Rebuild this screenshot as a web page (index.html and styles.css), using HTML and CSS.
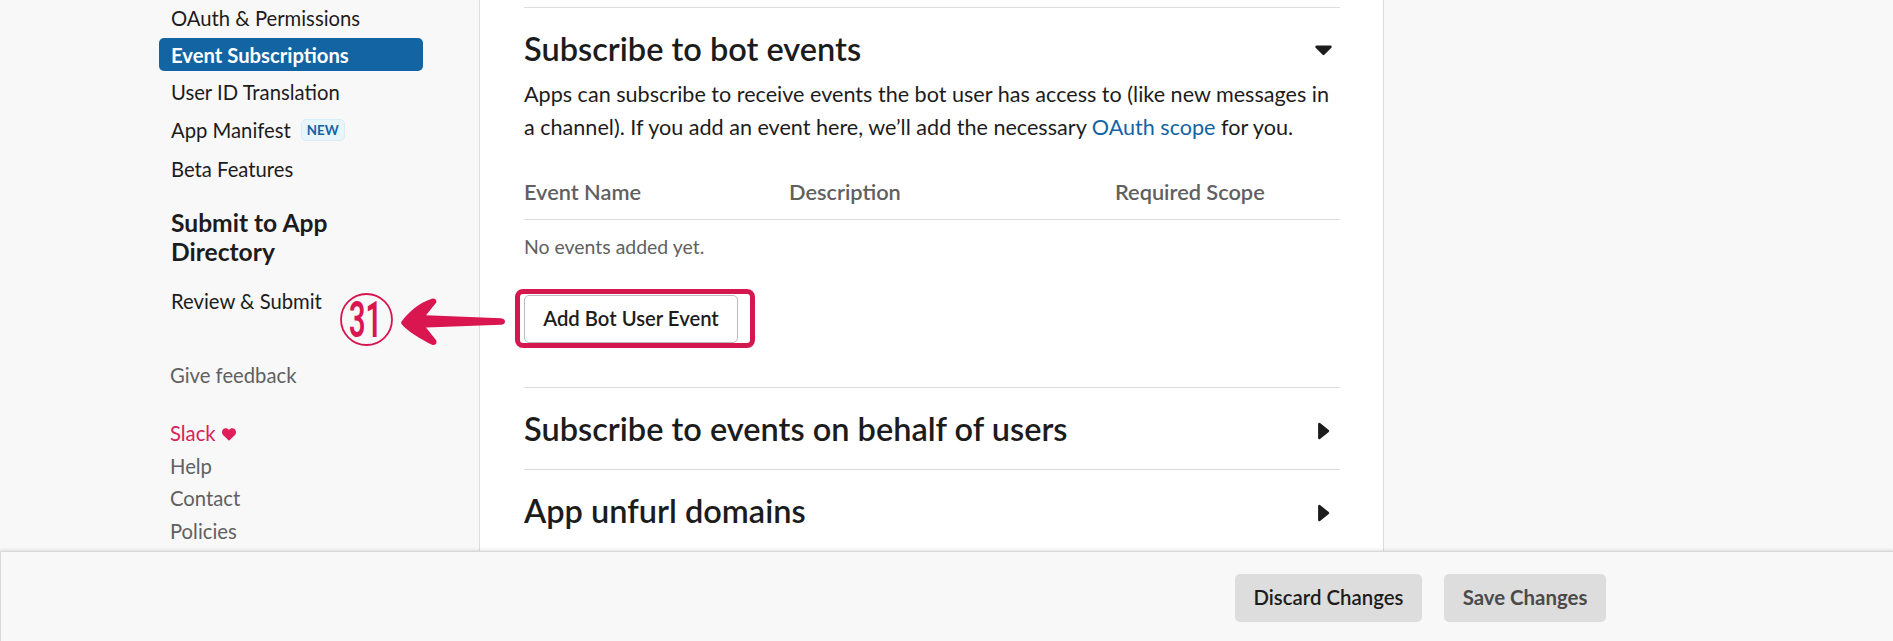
FILE: index.html
```html
<!DOCTYPE html>
<html lang="en">
<head>
<meta charset="utf-8">
<title>Event Subscriptions</title>
<link rel="stylesheet" href="styles.css">
</head>
<body>
<div class="page">
  <aside class="sidebar">
    <nav class="nav">
      <a class="nav-item">OAuth &amp; Permissions</a>
      <a class="nav-item active">Event Subscriptions</a>
      <a class="nav-item">User ID Translation</a>
      <a class="nav-item with-badge">App Manifest <span class="badge">NEW</span></a>
      <a class="nav-item">Beta Features</a>
    </nav>
    <h3 class="nav-title">Submit to App<br>Directory</h3>
    <a class="nav-item">Review &amp; Submit</a>
    <div class="links">
      <a class="feedback">Give feedback</a>
      <a class="slack">Slack <svg class="heart" viewBox="0 0 14 13"><path d="M7 12.8 1 6.9C-.4 5.400-.3 2.800 1.100 1.300 2.700-.3 5.500-.1 7 2 8.500-.1 11.300-.3 12.900 1.300 14.300 2.800 14.400 5.400 13 6.900Z"/></svg></a>
      <a>Help</a>
      <a>Contact</a>
      <a>Policies</a>
    </div>
  </aside>
  <main class="card">
    <section class="section bot">
      <header class="section-head"><h2>Subscribe to bot events</h2>
        <svg class="caret" viewBox="0 0 18 18"><path d="M1.500 5.800h14L8.500 13Z"/></svg></header>
      <p class="intro">Apps can subscribe to receive events the bot user has access to (like new messages in a channel). If you add an event here, we’ll add the necessary <a class="link">OAuth scope</a> for you.</p>
      <div class="table-head"><span>Event Name</span><span>Description</span><span>Required Scope</span></div>
      <p class="empty">No events added yet.</p>
      <div class="action">
        <button class="btn outline">Add Bot User Event</button>
        <div class="highlight"></div>
        <svg class="callout" viewBox="0 0 170 60">
          <circle cx="26.500" cy="29.500" r="25.500"/>
          <text x="9" y="46.800" textLength="33" lengthAdjust="spacingAndGlyphs">31</text>
          <path d="M61.500 31.500C68 23 78 13 92.500 8.500Q97 8.500 96.300 12.500L86 25.300 161 28.300Q165.200 29 165 31.700 164.800 34.300 161 34.800L86 37.500 96.300 50.500Q97.500 55 92.500 55C82 50 67 41 61.500 34Q60.700 32.700 61.500 31.500Z"/>
        </svg>
      </div>
    </section>
    <section class="section">
      <header class="section-head"><h2>Subscribe to events on behalf of users</h2>
        <svg class="caret" viewBox="0 0 18 18"><path d="M4.300 3v14L13 10Z"/></svg></header>
    </section>
    <section class="section">
      <header class="section-head"><h2>App unfurl domains</h2>
        <svg class="caret" viewBox="0 0 18 18"><path d="M4.300 3v14L13 10Z"/></svg></header>
    </section>
  </main>
</div>
<footer class="footer">
  <button class="btn gray">Discard Changes</button>
  <button class="btn gray save">Save Changes</button>
</footer>
</body>
</html>
```
FILE: styles.css
```css
* { box-sizing: border-box; }
body {
  margin: 0;
  height: 641px;
  overflow: hidden;
  display: flex;
  flex-direction: column;
  background: #f8f8f8;
  color: #1d1c1d;
  font-family: Lato, sans-serif;
  font-size: 20.25px;
}
h2, h3, p { margin: 0; }
.page { display: flex; height: 551px; flex: none; overflow: hidden; }

/* Sidebar */
.sidebar { width: 479px; flex: none; padding: 1px 56px 0 159px; }
.nav { display: flex; flex-direction: column; gap: 4px; }
.nav-item {
  display: flex;
  align-items: center;
  height: 33px;
  padding: 2px 0 0 12px;
  border-radius: 5px;
  line-height: 33px;
}
.active { background: #1264a3; color: #fff; font-weight: 700; font-size: 20.25px; }
.with-badge { height: 36px; gap: 10px; padding-top: 0; }
.badge {
  height: 22px;
  padding: 0 5px;
  border: 1px solid #d9ecf6;
  border-radius: 5px;
  background: #e8f5fa;
  color: #1264a3;
  font-size: 13.3px;
  font-weight: 700;
  line-height: 20px;
}
.nav-title { margin: 23px 0 18px; padding-left: 12px; font-size: 24.600px; line-height: 29px; font-weight: 700; }
.links { display: flex; flex-direction: column; padding: 42px 0 0 11px; color: #616061; line-height: 32.6px; }
.feedback { margin-bottom: 25.4px; }
.slack { display: flex; align-items: center; gap: 6px; color: #d72358; }
.heart { width: 14px; height: 13px; fill: #e01e5a; margin-top: 2px; }

/* Main card */
.card {
  width: 905px;
  flex: none;
  height: 551px;
  padding: 7px 43px 0 44px;
  border: solid #ddd;
  border-width: 0 1px;
  background: #fff;
}
.section { height: 82px; border-top: 1px solid #ddd; padding-top: 21px; }
.bot { height: 380px; }
.section-head { display: flex; justify-content: space-between; align-items: center; height: 39px; padding-right: 7px; }
h2 { font-size: 32.5px; line-height: 39px; font-weight: 600; }
.caret { width: 18px; height: 18px; overflow: visible; fill: #1d1c1d; stroke: #1d1c1d; stroke-width: 2.4; stroke-linejoin: round; margin-top: 2px; }
.intro { margin-top: 10px; font-size: 21.58px; line-height: 33px; }
.link { color: #1264a3; }
.table-head {
  display: grid;
  grid-template-columns: 265px 326px 1fr;
  margin-top: 35px;
  height: 41px;
  border-bottom: 1px solid #ddd;
  color: #616061;
  font-size: 21.75px;
  font-weight: 600;
  line-height: 26px;
}
.empty { margin-top: 15px; color: #616061; font-size: 19.45px; line-height: 24px; }
.action { position: relative; display: flex; margin-top: 36px; }

.btn { height: 48px; padding: 0 0 2px; border: 0; border-radius: 5px; color: #1d1c1d; font: 600 20.25px/44px Lato, sans-serif; }
.outline { width: 214px; border: 1px solid #bbb; background: #fff; }

/* Annotation over the button */
.highlight { position: absolute; left: -9px; top: -6px; width: 240px; height: 59px; border: 5px solid #d5174f; border-radius: 8px; }
.callout { position: absolute; left: -184px; top: -5px; width: 170px; height: 60px; fill: #d91650; }
.callout circle { fill: none; stroke: #d5174f; stroke-width: 1.8; }
.callout text { font: 600 50px Roboto, sans-serif; }

/* Footer */
.footer {
  flex: 1;
  position: relative;
  display: flex;
  justify-content: flex-end;
  gap: 22px;
  padding: 22px 287px 0 0;
  border: solid #d9d9d9;
  border-width: 1px 0 0 1px;
  background: #f8f8f8;
  box-shadow: 0 -1px 3px rgba(0, 0, 0, .12);
}
.gray { width: 187px; background: #ddd; font-size: 20.4px; }
.save { width: 162px; color: #4b4a4b; font-weight: 700; }
```
